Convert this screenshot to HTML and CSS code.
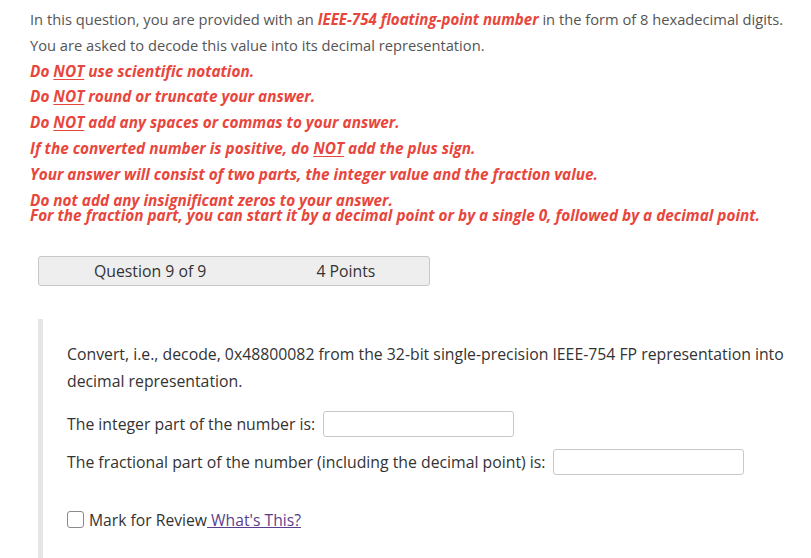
FILE: index.html
```html
<!DOCTYPE html>
<html>
<head>
<meta charset="utf-8">
<link rel="stylesheet" href="styles.css">
</head>
<body>
<div class="page">
  <div class="intro">
    <p class="line">In this question, you are provided with an <span class="em">IEEE-754 floating-point number</span> in the form of 8 hexadecimal digits.</p>
    <p class="line">You are asked to decode this value into its decimal representation.</p>
    <p class="line em">Do <u>NOT</u> use scientific notation.</p>
    <p class="line em">Do <u>NOT</u> round or truncate your answer.</p>
    <p class="line em">Do <u>NOT</u> add any spaces or commas to your answer.</p>
    <p class="line em">If the converted number is positive, do <u>NOT</u> add the plus sign.</p>
    <p class="line em">Your answer will consist of two parts, the integer value and the fraction value.</p>
    <p class="tight em">Do not add any insignificant zeros to your answer.<br>For the fraction part, you can start it by a decimal point or by a single 0, followed by a decimal point.</p>
  </div>
  <div class="qbar">
    <span class="qnum">Question 9 of 9</span>
    <span class="qpts">4 Points</span>
  </div>
  <div class="qbox">
    <p class="qtext">Convert, i.e., decode, 0x48800082 from the 32-bit single-precision IEEE-754 FP representation into decimal representation.</p>
    <div class="row">The integer part of the number is: <input class="ans" type="text"></div>
    <div class="row">The fractional part of the number (including the decimal point) is: <input class="ans" type="text"></div>
    <div class="review">
      <span class="box"></span>
      <span class="rlabel">Mark for Review</span><a class="what" href="#">&nbsp;What's This?</a>
    </div>
  </div>
</div>
</body>
</html>
```
FILE: styles.css
```css
html, body { margin: 0; padding: 0; background: #fff; }
body { font-family: "Open Sans", "Noto Sans", sans-serif; }
.page { padding: 7px 0 0 30px; }
.intro { font-size: 14.7px; color: #555; }
.intro p { margin: 0; }
.line { line-height: 25.8px; }
.tight { line-height: 15.5px; padding-top: 5px; }
.em { color: #e8463c; font-weight: 700; font-style: italic; font-size: 15.35px; }
.line .em { font-size: 15.1px; }
.em u { text-decoration-thickness: 1px; text-underline-offset: 2px; }
.qbar {
  margin: 32px 0 0 8px;
  width: 390px; height: 28px;
  background: #eee; border: 1px solid #c8c8c8; border-radius: 3px;
  display: flex; align-items: center;
  font-size: 15.8px; color: #333;
}
.qnum { margin-left: 55px; }
.qpts { margin-left: 110px; }
.qbox {
  margin: 33px 0 0 8px;
  border-left: 5px solid #e5e5e5;
  padding: 22px 0 30px 24px;
  color: #333; font-size: 15.8px;
}
.qtext { margin: 0; line-height: 27px; }
.row { margin-top: 16px; line-height: 26px; display: flex; align-items: center; }
.row + .row { margin-top: 12px; }
.ans {
  width: 191px; height: 26px; box-sizing: border-box;
  border: 1px solid #c8c8c8; border-radius: 3px; margin: 0 0 0 8px; padding: 0;
  background: #fff;
}
.review { margin-top: 35px; display: flex; align-items: center; line-height: 20px; font-size: 15.7px; }
.box {
  width: 17px; height: 17px; border: 1px solid #8a8a8a; border-radius: 3px; background: #fff;
  margin-right: 5px; box-sizing: border-box;
}
.rlabel { color: #333; }
.what { color: #5b3f8e; text-decoration: underline; text-decoration-thickness: 1px; }
```
